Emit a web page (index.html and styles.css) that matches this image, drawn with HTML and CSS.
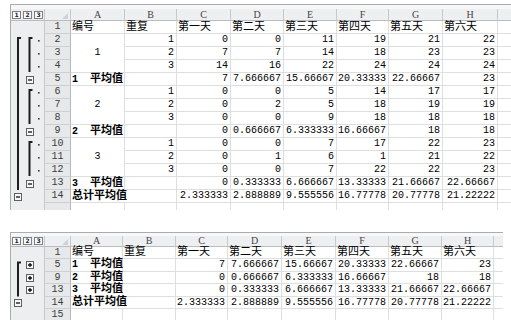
FILE: index.html
```html
<!DOCTYPE html>
<html lang="zh-CN">
<head>
  <meta charset="UTF-8">
  <title>分类汇总 - 平均值</title>
  <link rel="stylesheet" href="styles.css">
</head>
<body>
  <!-- expanded outline (level 3) -->
  <div class="sheet sheet-full">
    <div class="grid">
      <div class="ol">
        <svg width="33" height="189" viewBox="0 0 33 189">
          <g fill="none" stroke="#1e1e1e" stroke-width="2">
            <path d="M10 17 H7 V169"/>
            <path d="M21.5 17 H18.5 V51"/>
            <path d="M21.5 69 H18.5 V103"/>
            <path d="M21.5 121 H18.5 V155"/>
          </g>
          <g fill="#3a3a3a">
            <rect x="27" y="19" width="1.6" height="1.6"/>
            <rect x="27" y="32" width="1.6" height="1.6"/>
            <rect x="27" y="45" width="1.6" height="1.6"/>
            <rect x="27" y="71" width="1.6" height="1.6"/>
            <rect x="27" y="84" width="1.6" height="1.6"/>
            <rect x="27" y="97" width="1.6" height="1.6"/>
            <rect x="27" y="123" width="1.6" height="1.6"/>
            <rect x="27" y="136" width="1.6" height="1.6"/>
            <rect x="27" y="149" width="1.6" height="1.6"/>
          </g>
          <g fill="#f7f7f7" stroke="#5c5f63" stroke-width="1">
            <rect x="15.5" y="55.5" width="7" height="7"/>
            <rect x="15.5" y="107.5" width="7" height="7"/>
            <rect x="15.5" y="159.5" width="7" height="7"/>
            <rect x="3.5" y="172.5" width="7" height="7"/>
          </g>
          <g stroke="#111" stroke-width="1.3">
            <path d="M17 59 H21"/>
            <path d="M17 111 H21"/>
            <path d="M17 163 H21"/>
            <path d="M5 176 H9"/>
          </g>
        </svg>
      </div>

      <div class="levels"><span>1</span><span>2</span><span>3</span></div>
      <div class="corner"><svg width="25" height="11"><path d="M23 4 L23 10 L17 10 Z" fill="#cfd1d4"/></svg></div>
      <div class="h">A</div><div class="h">B</div><div class="h">C</div><div class="h">D</div>
      <div class="h">E</div><div class="h">F</div><div class="h">G</div><div class="h">H</div><div class="h x"></div>

      <div class="rn">1</div>
      <div class="c t">编号</div><div class="c t">重复</div><div class="c t">第一天</div><div class="c t">第二天</div>
      <div class="c t">第三天</div><div class="c t">第四天</div><div class="c t">第五天</div><div class="c t">第六天</div><div class="c x"></div>

      <div class="rn">2</div><div class="c mc">1</div><div class="c">1</div><div class="c">0</div><div class="c">0</div><div class="c">11</div><div class="c">19</div><div class="c">21</div><div class="c">22</div><div class="c x"></div>
      <div class="rn">3</div><div class="c">2</div><div class="c">7</div><div class="c">7</div><div class="c">14</div><div class="c">18</div><div class="c">23</div><div class="c">23</div><div class="c x"></div>
      <div class="rn">4</div><div class="c">3</div><div class="c">14</div><div class="c">16</div><div class="c">22</div><div class="c">24</div><div class="c">24</div><div class="c">24</div><div class="c x"></div>
      <div class="rn">5</div><div class="c t b"><span class="k">1  </span>平均值</div><div class="c"></div><div class="c">7</div><div class="c">7.666667</div><div class="c">15.66667</div><div class="c">20.33333</div><div class="c">22.66667</div><div class="c">23</div><div class="c x"></div>

      <div class="rn">6</div><div class="c mc">2</div><div class="c">1</div><div class="c">0</div><div class="c">0</div><div class="c">5</div><div class="c">14</div><div class="c">17</div><div class="c">17</div><div class="c x"></div>
      <div class="rn">7</div><div class="c">2</div><div class="c">0</div><div class="c">2</div><div class="c">5</div><div class="c">18</div><div class="c">19</div><div class="c">19</div><div class="c x"></div>
      <div class="rn">8</div><div class="c">3</div><div class="c">0</div><div class="c">0</div><div class="c">9</div><div class="c">18</div><div class="c">18</div><div class="c">18</div><div class="c x"></div>
      <div class="rn">9</div><div class="c t b"><span class="k">2  </span>平均值</div><div class="c"></div><div class="c">0</div><div class="c">0.666667</div><div class="c">6.333333</div><div class="c">16.66667</div><div class="c">18</div><div class="c">18</div><div class="c x"></div>

      <div class="rn">10</div><div class="c mc">3</div><div class="c">1</div><div class="c">0</div><div class="c">0</div><div class="c">7</div><div class="c">17</div><div class="c">22</div><div class="c">23</div><div class="c x"></div>
      <div class="rn">11</div><div class="c">2</div><div class="c">0</div><div class="c">1</div><div class="c">6</div><div class="c">1</div><div class="c">21</div><div class="c">22</div><div class="c x"></div>
      <div class="rn">12</div><div class="c">3</div><div class="c">0</div><div class="c">0</div><div class="c">7</div><div class="c">22</div><div class="c">22</div><div class="c">23</div><div class="c x"></div>
      <div class="rn">13</div><div class="c t b"><span class="k">3  </span>平均值</div><div class="c"></div><div class="c">0</div><div class="c">0.333333</div><div class="c">6.666667</div><div class="c">13.33333</div><div class="c">21.66667</div><div class="c">22.66667</div><div class="c x"></div>

      <div class="rn">14</div><div class="c t b ov">总计平均值</div><div class="c"></div><div class="c">2.333333</div><div class="c">2.888889</div><div class="c">9.555556</div><div class="c">16.77778</div><div class="c">20.77778</div><div class="c">21.22222</div><div class="c x"></div>
      <div class="rn cut"></div><div class="c cut"></div><div class="c cut"></div><div class="c cut"></div><div class="c cut"></div><div class="c cut"></div><div class="c cut"></div><div class="c cut"></div><div class="c cut"></div><div class="c x cut"></div>
    </div>
  </div>

  <!-- collapsed outline (level 2) -->
  <div class="sheet sheet-collapsed">
    <div class="grid">
      <div class="ol">
        <svg width="33" height="75" viewBox="0 0 33 75">
          <path d="M10 15.4 H7 V49.6" fill="none" stroke="#1e1e1e" stroke-width="2"/>
          <g fill="#f7f7f7" stroke="#5c5f63" stroke-width="1">
            <rect x="15.5" y="14.5" width="7" height="7"/>
            <rect x="15.5" y="27.5" width="7" height="7"/>
            <rect x="15.5" y="39.5" width="7" height="7"/>
            <rect x="3.5" y="52.5" width="7" height="7"/>
          </g>
          <g stroke="#111" stroke-width="1.3">
            <path d="M17 18 H21 M19 16 V20"/>
            <path d="M17 31 H21 M19 29 V33"/>
            <path d="M17 43 H21 M19 41 V45"/>
            <path d="M5 56 H9"/>
          </g>
        </svg>
      </div>

      <div class="levels"><span>1</span><span>2</span><span>3</span></div>
      <div class="corner"><svg width="25" height="10"><path d="M23 3 L23 9 L17 9 Z" fill="#cfd1d4"/></svg></div>
      <div class="h">A</div><div class="h">B</div><div class="h">C</div><div class="h">D</div>
      <div class="h">E</div><div class="h">F</div><div class="h">G</div><div class="h">H</div><div class="h x"></div>

      <div class="rn">1</div>
      <div class="c t">编号</div><div class="c t">重复</div><div class="c t">第一天</div><div class="c t">第二天</div>
      <div class="c t">第三天</div><div class="c t">第四天</div><div class="c t">第五天</div><div class="c t">第六天</div><div class="c x"></div>

      <div class="rn">5</div><div class="c t b"><span class="k">1  </span>平均值</div><div class="c"></div><div class="c">7</div><div class="c">7.666667</div><div class="c">15.66667</div><div class="c">20.33333</div><div class="c">22.66667</div><div class="c">23</div><div class="c x"></div>
      <div class="rn">9</div><div class="c t b"><span class="k">2  </span>平均值</div><div class="c"></div><div class="c">0</div><div class="c">0.666667</div><div class="c">6.333333</div><div class="c">16.66667</div><div class="c">18</div><div class="c">18</div><div class="c x"></div>
      <div class="rn">13</div><div class="c t b"><span class="k">3  </span>平均值</div><div class="c"></div><div class="c">0</div><div class="c">0.333333</div><div class="c">6.666667</div><div class="c">13.33333</div><div class="c">21.66667</div><div class="c">22.66667</div><div class="c x"></div>
      <div class="rn">14</div><div class="c t b ov">总计平均值</div><div class="c"></div><div class="c">2.333333</div><div class="c">2.888889</div><div class="c">9.555556</div><div class="c">16.77778</div><div class="c">20.77778</div><div class="c">21.22222</div><div class="c x"></div>
      <div class="rn">15</div><div class="c"></div><div class="c"></div><div class="c"></div><div class="c"></div><div class="c"></div><div class="c"></div><div class="c"></div><div class="c"></div><div class="c x"></div>
    </div>
  </div>
</body>
</html>
```

FILE: styles.css
```css
* {
  box-sizing: border-box;
}

body {
  margin: 0;
  background: #fff;
  color: #000;
  font-family: "Liberation Mono", "Noto Sans CJK SC", monospace;
  height: 320px;
  overflow: hidden;
}

.sheet {
  margin-left: 10px;
  border-top: 1px solid #a9adb2;
  border-left: 1px solid #a9adb2;
  background: #f7f7f7;
}

.sheet-full {
  margin-top: 4px;
  padding-top: 4px;
  width: 501px;
}

.sheet-collapsed {
  margin-top: 22px;
  padding-top: 3px;
  width: 493px;
}

.grid {
  display: grid;
  background: #fff;
}

.sheet-full .grid {
  grid-template-columns: 34px 26px 54px 52px 54px 53px 53px 52px 54px 55px 13px;
  grid-template-rows: 12px repeat(14, 13px) 7px;
}

.sheet-collapsed .grid {
  grid-template-columns: 34px 26px 52px 53px 52px 54px 54px 53px 53px 52px 9px;
  grid-template-rows: 11px repeat(6, 12.4px);
}

/* outline pane with group brackets */
.ol {
  grid-column: 1;
  grid-row: 2 / -1;
  background: #eceef0;
  border-right: 1px solid #c6c9cd;
  overflow: hidden;
}

.ol svg {
  display: block;
}

/* header row */
.levels,
.corner,
.h {
  background: #eeeff0;
  border-right: 1px solid #c6c9cd;
  border-bottom: 1px solid #b9bdc2;
}

.levels {
  display: flex;
  align-items: center;
  gap: 2px;
  padding-left: 1px;
  background: #eceef0;
}

.levels span {
  width: 9px;
  height: 8px;
  border: 1px solid #7d8186;
  background: #fbfbfb;
  font: bold 6px/6px "DejaVu Sans", sans-serif;
  color: #222;
  text-align: center;
}

.corner svg {
  display: block;
}

.h {
  font: 10px/11px "Liberation Serif", serif;
  color: #444;
  text-align: center;
}

.sheet-collapsed .h {
  line-height: 10px;
}

.h.x {
  border-right: none;
}

/* row numbers */
.rn {
  background: #e7e8ea;
  border-right: 1px solid #b5b9be;
  border-bottom: 1px solid #cdd0d3;
  font: 10px/12px "Liberation Mono", monospace;
  color: #3c3c3c;
  text-align: center;
}

/* cells */
.c {
  border-right: 1px solid #dcdee0;
  border-bottom: 1px solid #dcdee0;
  font-size: 10px;
  line-height: 12px;
  text-align: right;
  padding-right: 2px;
  white-space: pre;
}

.sheet-collapsed .c,
.sheet-collapsed .rn {
  line-height: 11.4px;
}

.c.t {
  text-align: left;
  padding-left: 1px;
  font-size: 11px;
}

.c.b {
  font-weight: bold;
}

.c .k {
  font-size: 10px;
}

.c.mc {
  grid-row: span 3;
  display: flex;
  align-items: center;
  justify-content: center;
  padding-right: 0;
}

.c.ov,
.c.x {
  border-right: none;
}

.cut {
  border-bottom: none;
}
```
